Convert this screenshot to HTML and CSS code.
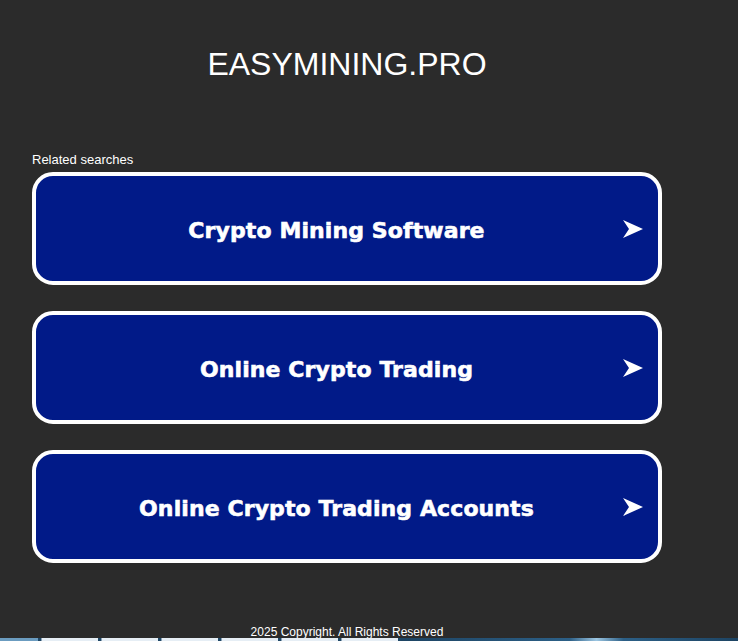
FILE: index.html
```html
<!DOCTYPE html>
<html lang="en">
<head>
<meta charset="utf-8">
<title>EASYMINING.PRO</title>
<link rel="stylesheet" href="styles.css">
</head>
<body>
<div class="page">
  <h1 class="title">EASYMINING.PRO</h1>
  <div class="related">Related searches</div>
  <div class="list">
    <a class="btn" href="#"><span class="btn-text">Crypto Mining Software</span><svg class="arrow" viewBox="0 0 20 18" width="20" height="18"><polygon points="0,0 20,9 0,18 6,9" fill="#fff"/></svg></a>
    <a class="btn" href="#"><span class="btn-text">Online Crypto Trading</span><svg class="arrow" viewBox="0 0 20 18" width="20" height="18"><polygon points="0,0 20,9 0,18 6,9" fill="#fff"/></svg></a>
    <a class="btn" href="#"><span class="btn-text">Online Crypto Trading Accounts</span><svg class="arrow" viewBox="0 0 20 18" width="20" height="18"><polygon points="0,0 20,9 0,18 6,9" fill="#fff"/></svg></a>
  </div>
  <div class="footer">2025 Copyright. All Rights Reserved</div>
</div>
<div class="taskbar">
  <span class="tb-start"></span>
  <span class="tb-item"></span>
  <span class="tb-item"></span>
  <span class="tb-item"></span>
  <span class="tb-item"></span>
  <span class="tb-item"></span>
  <span class="tb-item"></span>
  <span class="tb-rest"></span>
</div>
</body>
</html>
```
FILE: styles.css
```css
html, body {
  margin: 0;
  padding: 0;
  background: #2b2b2b;
  height: 100%;
  overflow: hidden;
}
body {
  font-family: "Liberation Sans", Arial, sans-serif;
  color: #fff;
}
.page {
  width: 630px;
  margin-left: 32px;
}
.title {
  margin: 0;
  padding-top: 46px;
  font-size: 32px;
  line-height: 36px;
  font-weight: normal;
  text-align: center;
  color: #fff;
}
.related {
  margin-top: 70px;
  font-size: 13px;
  line-height: 15px;
}
.list {
  margin-top: 5px;
  display: flex;
  flex-direction: column;
  gap: 26px;
}
.btn {
  box-sizing: border-box;
  height: 113px;
  display: flex;
  align-items: center;
  padding: 0 15px 0 14px;
  background: #011a88;
  border: 4px solid #fff;
  border-radius: 21px;
  text-decoration: none;
  color: #fff;
}
.btn-text {
  flex: 1;
  padding-top: 3px;
  text-align: center;
  font-family: "DejaVu Sans", sans-serif;
  font-weight: bold;
  font-size: 22px;
  letter-spacing: 0.1px;
  -webkit-text-stroke: 0.6px #fff;
}
.arrow {
  display: block;
  flex: none;
}
.footer {
  margin-top: 62px;
  font-size: 12px;
  line-height: 14px;
  text-align: center;
}
.taskbar {
  position: fixed;
  left: 0;
  right: 0;
  bottom: 0;
  height: 3px;
  display: flex;
  gap: 3px;
  background: #1f4766;
}
.tb-start {
  width: 38px;
  background: #6b9cc0;
}
.tb-item {
  width: 56px;
  background: #e6eef5;
  border-left: 1px solid #8aa0b4;
}
.tb-rest {
  flex: 1;
  background: linear-gradient(90deg, #1d4463 0%, #2c5f86 50%, #9cc6e2 58%, #2c5f86 66%, #1d4463 100%);
}
```
